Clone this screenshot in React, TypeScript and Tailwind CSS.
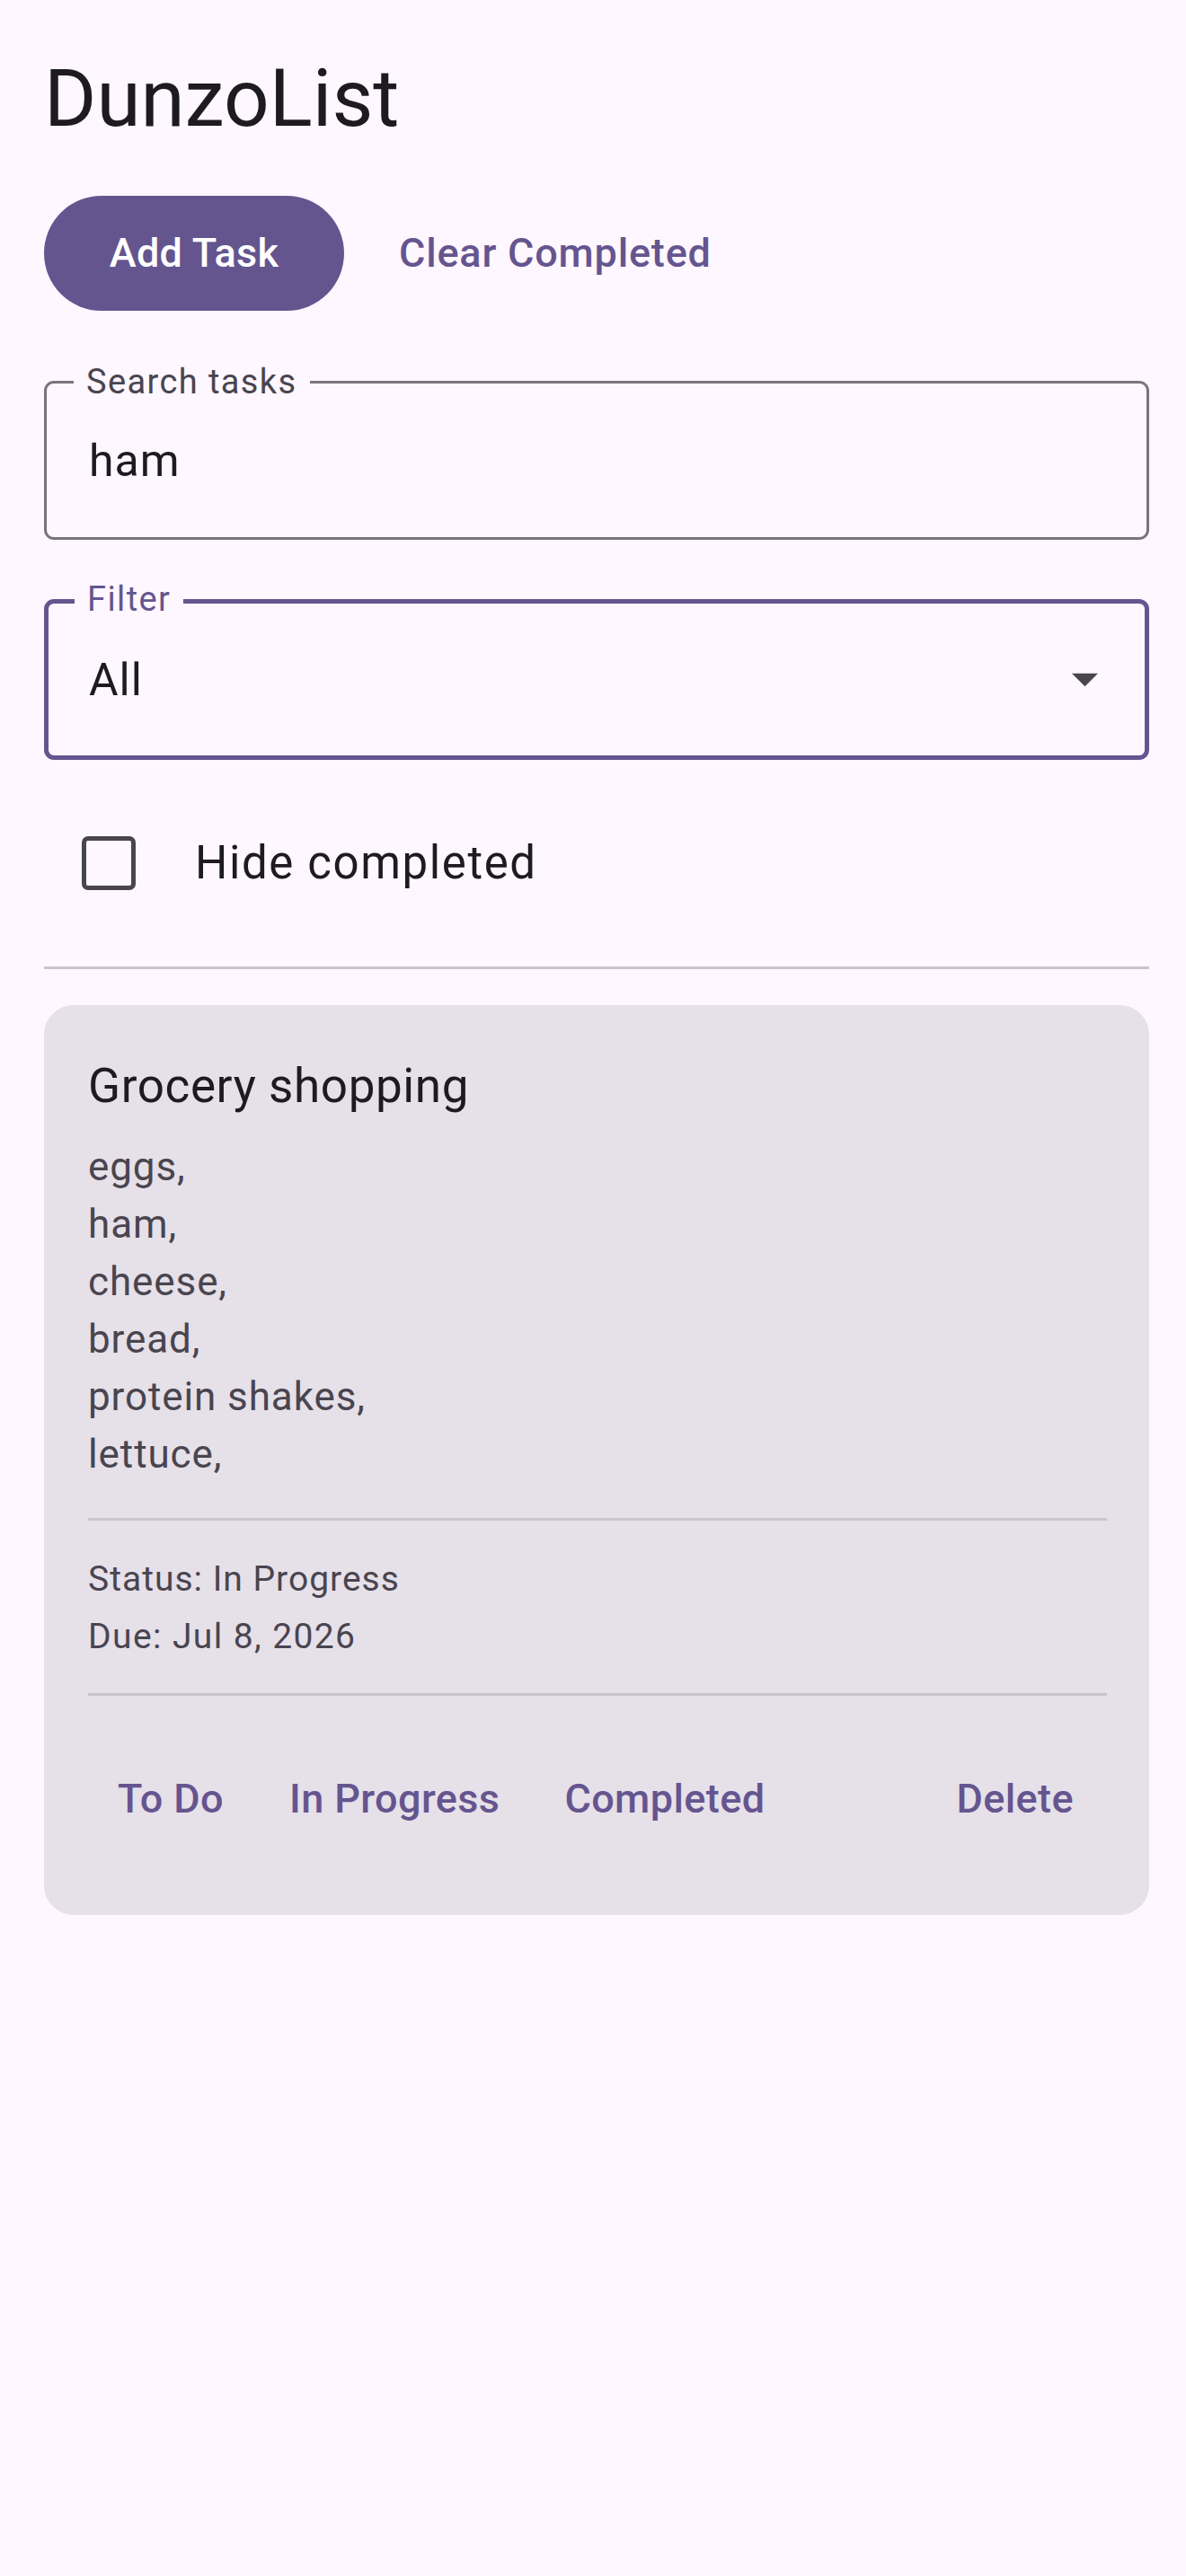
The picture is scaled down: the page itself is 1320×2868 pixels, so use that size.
import { useState } from 'react';

interface Task {
    title: string;
    items: string[];
    status: string;
    due: string;
}

const task: Task = {
    title: 'Grocery shopping',
    items: ['eggs,', 'ham,', 'cheese,', 'bread,', 'protein shakes,', 'lettuce,'],
    status: 'In Progress',
    due: 'Jul 8, 2026',
};

function TaskCard({ task }: { task: Task }) {
    return (
        <div className="mt-[40px] rounded-[33px] bg-[#e6e0e9] pl-[49px] pr-[47px] pt-[59px] pb-[74px]">
            <div className="text-[53px] leading-[62px] tracking-[0.6px] text-[#1d1b20]">{task.title}</div>
            <div className="mt-[27px] text-[44px] leading-[64px] tracking-[0.9px] text-[#49454f]">
                {task.items.map((item) => (
                    <div key={item}>{item}</div>
                ))}
            </div>
            <div className="mt-[39px] h-[3px] bg-[#cac4d0]" />
            <div className="mt-[33px] text-[39px] leading-[64px] tracking-[1px] text-[#49454f]">
                <div>Status: {task.status}</div>
                <div className="tracking-[1.4px]">Due: {task.due}</div>
            </div>
            <div className="mt-[31px] h-[3px] bg-[#cac4d0]" />
            <div className="mt-[60px] flex h-[110px] items-center text-[45px] font-medium tracking-[0.4px] text-[#65558f]">
                <button className="h-full px-[33px]">To Do</button>
                <button className="ml-[7px] h-full px-[33px]">In Progress</button>
                <button className="ml-[6px] h-full px-[33px]">Completed</button>
                <div className="flex-1" />
                <button className="h-full pl-[33px] pr-[37px]">Delete</button>
            </div>
        </div>
    );
}

export default function App() {
    const [search, setSearch] = useState('ham');
    const [hideCompleted, setHideCompleted] = useState(false);

    return (
        <div className="min-h-screen bg-[#fef7ff] pl-[49px] pr-[41px] font-['Roboto',sans-serif]">
            <h1 className="pt-[60px] text-[89px] leading-[100px] text-[#1d1b20]">DunzoList</h1>

            <div className="mt-[58px] flex items-center">
                <button className="flex h-[128px] w-[334px] items-center justify-center rounded-full bg-[#65558f] text-[45px] font-medium tracking-[0.3px] text-white">
                    Add Task
                </button>
                <button className="ml-[28px] px-[33px] text-[45px] font-medium tracking-[0.8px] text-[#65558f]">
                    Clear Completed
                </button>
            </div>

            {/* search field */}
            <div className="relative mt-[78px] flex h-[177px] items-center rounded-[11px] border-[3px] border-[#79747e] pl-[47px]">
                <span className="absolute left-[30px] top-[-24px] bg-[#fef7ff] px-[14px] text-[38px] leading-[44px] tracking-[1.4px] text-[#49454f]">
                    Search tasks
                </span>
                <input
                    value={search}
                    onChange={(e) => setSearch(e.target.value)}
                    className="w-full bg-transparent text-[50px] leading-[60px] tracking-[1px] text-[#1d1b20] outline-none"
                />
            </div>

            {/* filter dropdown */}
            <div className="relative mt-[66px] flex h-[179px] items-center rounded-[11px] border-[5px] border-[#65558f] pl-[45px] pr-[52px]">
                <span className="absolute left-[29px] top-[-27px] bg-[#fef7ff] px-[14px] text-[38px] leading-[44px] tracking-[1.4px] text-[#65558f]">
                    Filter
                </span>
                <span className="flex-1 text-[50px] leading-[60px] tracking-[1px] text-[#1d1b20]">All</span>
                <svg width="29" height="16" viewBox="0 0 10 5">
                    <path d="M0 0l5 5 5-5z" fill="#49454f" />
                </svg>
            </div>

            <label className="mt-[85px] flex h-[60px] cursor-pointer items-center pl-[42px]">
                <input
                    type="checkbox"
                    checked={hideCompleted}
                    onChange={(e) => setHideCompleted(e.target.checked)}
                    className="h-[60px] w-[60px] appearance-none rounded-[7px] border-[5px] border-[#49454f]"
                />
                <span className="ml-[66px] text-[51px] leading-[60px] tracking-[1.6px] text-[#1d1b20]">Hide completed</span>
            </label>

            <div className="mt-[85px] h-[3px] bg-[#cac4d0]" />

            <TaskCard task={task} />
        </div>
    );
}
